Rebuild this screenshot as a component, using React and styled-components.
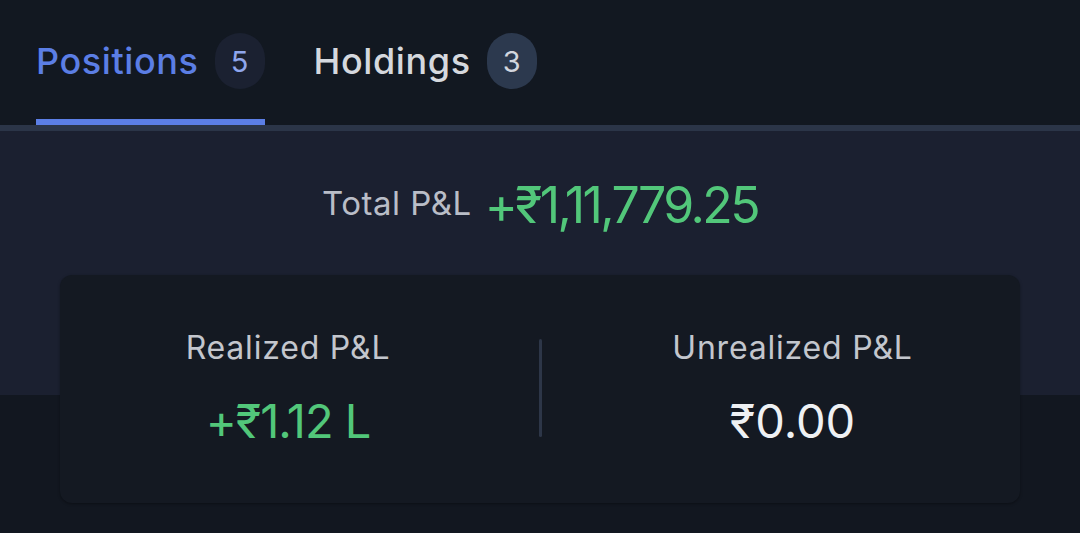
import React from "react";
import styled, { createGlobalStyle } from "styled-components";

const Global = createGlobalStyle`
  html, body { margin: 0; padding: 0; background: #121720; }
  body { font-family: Inter, "Noto Sans", "DejaVu Sans", sans-serif; }
  * { box-sizing: border-box; }
`;

const Page = styled.div`
  width: 1080px;
  height: 533px;
  overflow: hidden;
  background: #121720;
  display: flex;
  flex-direction: column;
`;

const TabBar = styled.nav`
  display: flex;
  align-items: stretch;
  gap: 49px;
  height: 131px;
  padding-left: 36px;
  background: #121821;
  border-bottom: 6px solid #2b3548;
`;

const Tab = styled.div`
  position: relative;
  display: flex;
  align-items: center;
  gap: 16px;
  padding-bottom: 3px;
  color: ${(p) => (p.$active ? "#5b7ee5" : "#d5d8de")};
  font-size: 36px;
  font-weight: 500;
  letter-spacing: 0.6px;
  &::after {
    content: "";
    position: absolute;
    left: 0;
    right: 0;
    bottom: 0;
    height: 6px;
    background: ${(p) => (p.$active ? "#5b7ee5" : "transparent")};
  }
`;

const Badge = styled.span`
  display: inline-flex;
  align-items: center;
  justify-content: center;
  width: 50px;
  height: 56px;
  border-radius: 25px;
  font-size: 29px;
  font-weight: 400;
  letter-spacing: 0;
  background: ${(p) => (p.$active ? "#1b2131" : "#2c394e")};
  color: ${(p) => (p.$active ? "#8fa6ec" : "#d2d6de")};
`;

const Summary = styled.section`
  display: flex;
  flex-direction: column;
  align-items: center;
  padding-top: 44px;
  background: linear-gradient(to bottom, #1b2030 0, #1b2030 264px, #121720 264px);
  flex: 1;
`;

const TotalRow = styled.div`
  display: flex;
  align-items: center;
  gap: 13px;
  height: 60px;
`;

const TotalLabel = styled.span`
  color: #b9bdc7;
  font-size: 33px;
  font-weight: 400;
  letter-spacing: 0.5px;
  margin-top: -4px;
`;

const Amount = styled.span`
  color: ${(p) => (p.$tone === "green" ? "#52c77a" : "#eef0f3")};
  font-size: ${(p) => p.$size}px;
  font-weight: 400;
  letter-spacing: ${(p) => p.$track}px;
`;

const Card = styled.div`
  margin-top: 40px;
  width: 960px;
  height: 228px;
  background: #141922;
  border-radius: 12px;
  box-shadow: 0 1px 3px rgba(0, 0, 0, 0.35);
  display: grid;
  grid-template-columns: 456px 3px 1fr;
  column-gap: 23px;
  align-items: center;
  padding-bottom: 2px;
`;

const Stat = styled.div`
  display: flex;
  flex-direction: column;
  align-items: center;
  gap: 25px;
`;

const StatLabel = styled.span`
  color: #c3c6cd;
  font-size: 32px;
  font-weight: 400;
  letter-spacing: 0.8px;
`;

const Divider = styled.div`
  width: 3px;
  height: 98px;
  border-radius: 2px;
  background: #2d3648;
`;

export default function App() {
  return (
    <Page>
      <Global />
      <TabBar>
        <Tab $active>
          Positions <Badge $active>5</Badge>
        </Tab>
        <Tab>
          Holdings <Badge>3</Badge>
        </Tab>
      </TabBar>
      <Summary>
        <TotalRow>
          <TotalLabel>Total P&amp;L</TotalLabel>
          <Amount $tone="green" $size={50} $track={-2.6}>+₹1,11,779.25</Amount>
        </TotalRow>
        <Card>
          <Stat>
            <StatLabel>Realized P&amp;L</StatLabel>
            <Amount $tone="green" $size={47} $track={-1}>+₹1.12 L</Amount>
          </Stat>
          <Divider />
          <Stat>
            <StatLabel>Unrealized P&amp;L</StatLabel>
            <Amount $size={47} $track={0}>₹0.00</Amount>
          </Stat>
        </Card>
      </Summary>
    </Page>
  );
}
